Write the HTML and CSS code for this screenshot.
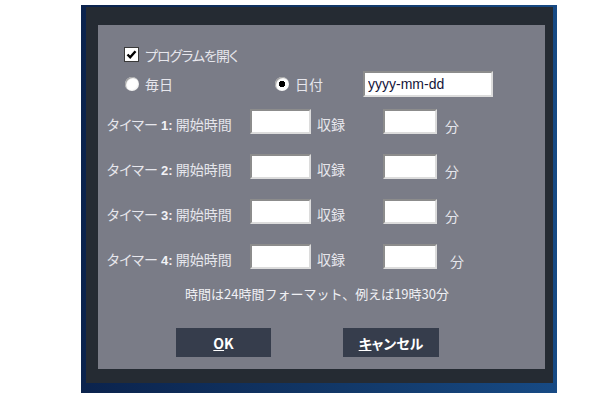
FILE: index.html
```html
<!DOCTYPE html>
<html lang="ja">

<head>
    <meta charset="UTF-8">
    <title>タイマー設定</title>
    <link rel="stylesheet" href="styles.css">
</head>

<body>

    <div class="window">
        <div class="frame">
            <div class="panel">

                <label class="check-row">
                    <span class="checkbox">
                        <svg width="11" height="11" viewBox="0 0 11 11">
                            <path d="M1.5 5.5 L4.2 8.3 L9.5 2.2" fill="none" stroke="#000" stroke-width="2.4" />
                        </svg>
                    </span>
                    <span class="check-text">プログラムを開く</span>
                </label>

                <div class="radio-row">
                    <label class="radio-opt daily"><span class="radio"></span>毎日</label>
                    <label class="radio-opt date"><span class="radio checked"></span>日付</label>
                    <input class="date-input" type="text" value="yyyy-mm-dd">
                </div>

                <div class="timers">
                    <span class="timer-label">タイマー <b>1:</b> 開始時間</span>
                    <input class="field start" type="text">
                    <span class="word">収録</span>
                    <input class="field length" type="text">
                    <span class="unit">分</span>

                    <span class="timer-label">タイマー <b>2:</b> 開始時間</span>
                    <input class="field start" type="text">
                    <span class="word">収録</span>
                    <input class="field length" type="text">
                    <span class="unit">分</span>

                    <span class="timer-label">タイマー <b>3:</b> 開始時間</span>
                    <input class="field start" type="text">
                    <span class="word">収録</span>
                    <input class="field length" type="text">
                    <span class="unit">分</span>

                    <span class="timer-label">タイマー <b>4:</b> 開始時間</span>
                    <input class="field start" type="text">
                    <span class="word">収録</span>
                    <input class="field length" type="text">
                    <span class="unit last">分</span>
                </div>

                <p class="note">時間は24時間フォーマット、例えば19時30分</p>

                <div class="buttons">
                    <button type="button"><u>O</u>K</button>
                    <button type="button"><u>キ</u>ャンセル</button>
                </div>

            </div>
        </div>
    </div>

</body>

</html>
```

FILE: styles.css
```css
* {
    box-sizing: border-box;
}

body {
    margin: 0;
    background: #fff;
    font-family: "Noto Sans CJK JP", "Liberation Sans", sans-serif;
}

.window {
    width: 476px;
    height: 388px;
    margin: 5px 0 0 81px;
    padding: 2px 4px 10px 5px;
    background: linear-gradient(90deg, #0b234d, #123868 55%, #174a84);
}

.frame {
    height: 100%;
    padding: 18px 8px 14px 12px;
    background: #252b33;
}

.panel {
    height: 100%;
    padding-top: 22px;
    background: #7a7c87;
    color: #e6e6ec;
    font-size: 14px;
    line-height: 16px;
    font-feature-settings: "palt";
}

/* checkbox row */

.check-row {
    display: flex;
    align-items: center;
    gap: 6px;
    height: 15px;
    margin-left: 26px;
}

.check-text {
    letter-spacing: -1px;
}

.checkbox {
    width: 15px;
    height: 15px;
    background: #fff;
    border: 1px solid #3a3a3a;
    display: flex;
    justify-content: center;
    align-items: center;
}

/* radio row */

.radio-row {
    display: flex;
    align-items: center;
    height: 26px;
    margin-top: 9px;
}

.radio-opt {
    display: flex;
    align-items: center;
    gap: 6px;
}

.radio-opt.daily {
    width: 150px;
    margin-left: 27px;
}

.radio-opt.date {
    width: 88px;
}

.radio {
    width: 14px;
    height: 14px;
    border-radius: 50%;
    background: radial-gradient(circle at 40% 40%, #fff 55%, #d8d8d8);
    box-shadow: inset 1px 1px 1px #9a9a9a;
}

.radio.checked {
    background: radial-gradient(circle, #000 0 3px, #fff 3.5px 60%, #d8d8d8);
}

.date-input {
    width: 130px;
    height: 26px;
    padding: 0 0 0 3px;
    font-family: "Liberation Sans", sans-serif;
    font-size: 14px;
    color: #15153a;
}

/* timer rows */

.timers {
    display: grid;
    grid-template-columns: 143px 61px 72px 54px auto;
    grid-auto-rows: 25px;
    row-gap: 20px;
    margin-top: 12px;
    padding-left: 9px;
}

.timer-label,
.word,
.unit {
    padding-top: 7px;
    white-space: nowrap;
}

.timer-label b {
    font-family: "Liberation Sans", sans-serif;
    font-weight: bold;
    font-size: 13px;
    color: #f2f2f6;
}

.word {
    padding-left: 6px;
}

.unit {
    padding-left: 8px;
    padding-top: 9px;
}

.unit.last {
    padding-left: 13px;
}

input {
    margin: 0;
    background: #fff;
    border: 2px solid;
    border-color: #8c8c8c #dcdcdc #dcdcdc #8c8c8c;
    outline: none;
}

.field {
    height: 25px;
}

.field.start {
    width: 61px;
}

.field.length {
    width: 54px;
}

/* footer */

.note {
    margin: 17px 9px 0 0;
    font-size: 13px;
    font-feature-settings: normal;
    text-align: center;
    color: #f0f0f4;
}

.buttons {
    display: flex;
    gap: 72px;
    margin-top: 26px;
    padding-left: 78px;
}

button {
    width: 95px;
    height: 29px;
    padding: 0;
    border: none;
    background: #363d4c;
    color: #fff;
    font-family: "Noto Sans CJK JP", "Liberation Sans", sans-serif;
    font-feature-settings: "palt";
    font-size: 14px;
    font-weight: bold;
}

button + button {
    width: 96px;
}
```
